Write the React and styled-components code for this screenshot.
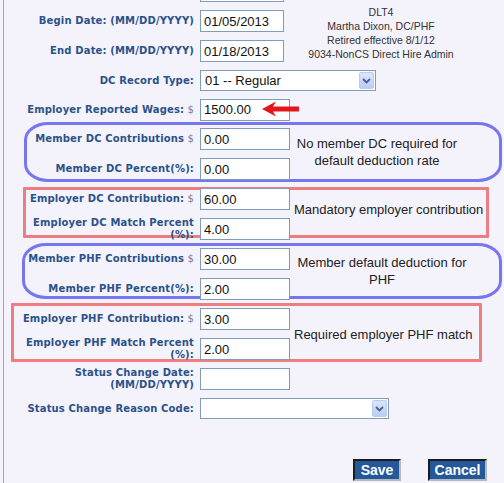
import React from "react";
import styled, { createGlobalStyle } from "styled-components";

const GlobalStyle = createGlobalStyle`
  html, body {
    margin: 0;
    padding: 0;
    background: #f4f2fb;
    overflow: hidden;
  }
  body {
    font-family: "Liberation Sans", Arial, sans-serif;
  }
  #root { width: 504px; height: 483px; }
`;

const Page = styled.div`
  display: flex;
  flex-direction: column;
  height: 483px;
  margin-left: 3px;
  border-left: 1px solid #a3a3a8;
  background: #f4f2fb;
  overflow: hidden;
`;

const Form = styled.div`
  display: flex;
  flex-direction: column;
  margin-top: -24px;
`;

const Row = styled.div`
  position: relative;
  display: flex;
  align-items: center;
  height: ${(p) => p.$h || 30}px;
`;

const Label = styled.div`
  flex-shrink: 0;
  width: 190px;
  margin-right: 6px;
  text-align: right;
  font-family: "DejaVu Sans", Verdana, sans-serif;
  font-weight: bold;
  font-size: 10px;
  letter-spacing: 0.15px;
  line-height: 12px;
  color: #2b5389;
`;

const Dollar = styled.span`
  font-weight: normal;
  color: #6f84a6;
`;

const TextInput = styled.input`
  box-sizing: border-box;
  width: ${(p) => p.$w || 90}px;
  height: 22px;
  margin: 0;
  padding: 0 3px;
  border: 1px solid #7f9db9;
  background: #ffffff;
  font-family: "Liberation Sans", Arial, sans-serif;
  font-size: 13px;
  color: #111;
  outline: none;
`;

const SelectBox = styled.div`
  box-sizing: border-box;
  display: flex;
  align-items: center;
  width: ${(p) => p.$w}px;
  height: 21px;
  padding-left: 4px;
  border: 1px solid #7f9db9;
  background: #ffffff;
  font-family: "Liberation Sans", Arial, sans-serif;
  font-size: 13px;
  color: #111;
`;

const SelectText = styled.span`
  flex: 1;
  white-space: nowrap;
`;

const ArrowBtn = styled.span`
  box-sizing: border-box;
  display: flex;
  align-items: center;
  justify-content: center;
  width: 15px;
  height: 17px;
  margin-right: 1px;
  border: 1px solid #b9cbef;
  border-radius: 2px;
  background: linear-gradient(#dbe6fc, #b9ccf3);
`;

const Section = styled.div`
  position: relative;
  display: flex;
  align-items: flex-start;
`;

const Fields = styled.div`
  display: flex;
  flex-direction: column;
  width: 290px;
  flex-shrink: 0;
`;

const Info = styled.div`
  width: 174px;
  margin-top: -1px;
  text-align: center;
  font-family: "Liberation Sans", Arial, sans-serif;
  font-size: 10.5px;
  line-height: 14px;
  color: #333;
`;

const Note = styled.div`
  align-self: center;
  width: ${(p) => p.$w}px;
  margin-bottom: ${(p) => p.$mb || 0}px;
  text-align: center;
  white-space: nowrap;
  font-family: "Liberation Sans", Arial, sans-serif;
  font-size: 13px;
  line-height: 17px;
  color: #222;
`;

const Highlight = styled.div`
  position: absolute;
  top: ${(p) => p.$t}px;
  left: ${(p) => p.$l}px;
  right: ${(p) => p.$r}px;
  bottom: ${(p) => p.$b}px;
  border: 3px solid ${(p) => (p.$blue ? "#7676ee" : "#ee7d80")};
  border-radius: ${(p) => (p.$blue ? "24px / 18px" : "1px")};
  pointer-events: none;
`;

const RedArrow = styled.svg`
  position: absolute;
  left: 258px;
  top: 6px;
`;

const ButtonBar = styled.div`
  display: flex;
  justify-content: flex-end;
  gap: 27px;
  margin-top: 36px;
  padding-right: 17px;
`;

const Button = styled.button`
  box-sizing: border-box;
  width: ${(p) => p.$w}px;
  height: 22px;
  padding: 0;
  background: #23589b;
  color: #ffffff;
  font-family: "Liberation Sans", Arial, sans-serif;
  font-weight: bold;
  font-size: 14px;
  border: 2px solid;
  border-color: #1c1c1c #b8b8b8 #b8b8b8 #1c1c1c;
  cursor: pointer;
`;

const Chevron = () => (
  <svg width="9" height="6" viewBox="0 0 9 6">
    <path d="M1 1 L4.5 4.5 L8 1" fill="none" stroke="#4a5f86" strokeWidth="1.8" />
  </svg>
);

const Select = ({ w, value }) => (
  <SelectBox $w={w}>
    <SelectText>{value}</SelectText>
    <ArrowBtn>
      <Chevron />
    </ArrowBtn>
  </SelectBox>
);

const Field = ({ label, dollar, value, w, h }) => (
  <Row $h={h}>
    <Label>
      {label}
      {dollar && <Dollar> $</Dollar>}
    </Label>
    <TextInput $w={w} value={value} readOnly />
  </Row>
);

export default function App() {
  return (
    <>
      <GlobalStyle />
      <Page>
        <Form>
          <Row>
            <Label />
            <TextInput $w={84} value="" readOnly />
          </Row>

          <Section>
            <Fields>
              <Field label="Begin Date: (MM/DD/YYYY)" value="01/05/2013" w={84} />
              <Field label="End Date: (MM/DD/YYYY)" value="01/18/2013" w={84} />
            </Fields>
            <Info>
              DLT4
              <br />
              Martha Dixon, DC/PHF
              <br />
              Retired effective 8/1/12
              <br />
              9034-NonCS Direct Hire Admin
            </Info>
          </Section>

          <Row $h={29}>
            <Label>DC Record Type:</Label>
            <Select w={176} value="01 -- Regular" />
          </Row>

          <Row $h={29}>
            <Label>
              Employer Reported Wages:<Dollar> $</Dollar>
            </Label>
            <TextInput $w={90} value="1500.00" readOnly />
            <RedArrow width="38" height="16" viewBox="0 0 38 16">
              <path
                d="M0 8 L14 0.5 L11 5.6 L37 5.6 L37 10.4 L11 10.4 L14 15.5 Z"
                fill="#e4161c"
              />
            </RedArrow>
          </Row>

          <Section>
            <Highlight $blue $t={-2} $l={20} $r={2} $b={2} />
            <Fields>
              <Field label="Member DC Contributions" dollar value="0.00" />
              <Field label="Member DC Percent(%):" value="0.00" />
            </Fields>
            <Note $w={166} $mb={5}>
              No member DC required for
              <br />
              default deduction rate
            </Note>
          </Section>

          <Section>
            <Highlight $t={3} $l={19} $r={15} $b={6} />
            <Fields>
              <Field label="Employer DC Contribution:" dollar value="60.00" />
              <Field
                label={
                  <>
                    Employer DC Match Percent
                    <br />
                    (%):
                  </>
                }
                value="4.00"
              />
            </Fields>
            <Note $w={188} $mb={10}>
              Mandatory employer contribution
            </Note>
          </Section>

          <Section>
            <Highlight $blue $t={-1} $l={18} $r={2} $b={5} />
            <Fields>
              <Field label="Member PHF Contributions" dollar value="30.00" />
              <Field label="Member PHF Percent(%):" value="2.00" />
            </Fields>
            <Note $w={176} $mb={7}>
              Member default deduction for
              <br />
              PHF
            </Note>
          </Section>

          <Section>
            <Highlight $t={-1} $l={7} $r={22} $b={2} />
            <Fields>
              <Field label="Employer PHF Contribution:" dollar value="3.00" />
              <Field
                label={
                  <>
                    Employer PHF Match Percent
                    <br />
                    (%):
                  </>
                }
                value="2.00"
              />
            </Fields>
            <Note $w={177}>Required employer PHF match</Note>
          </Section>

          <Field
            label={
              <>
                Status Change Date:
                <br />
                (MM/DD/YYYY)
              </>
            }
            value=""
          />

          <Row $h={29}>
            <Label>Status Change Reason Code:</Label>
            <Select w={189} value="" />
          </Row>

          <ButtonBar>
            <Button $w={48}>Save</Button>
            <Button $w={59}>Cancel</Button>
          </ButtonBar>
        </Form>
      </Page>
    </>
  );
}
